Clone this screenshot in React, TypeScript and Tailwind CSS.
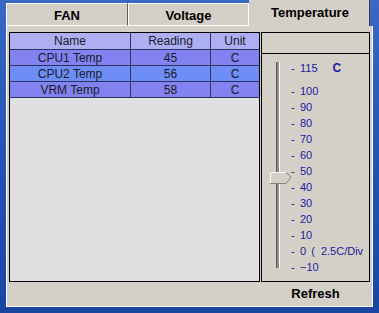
import React from "react";

const rows = [
  { name: "CPU1 Temp", reading: "45", unit: "C", bg: "bg-[#8282f0]" },
  { name: "CPU2 Temp", reading: "56", unit: "C", bg: "bg-[#6e8ef6]" },
  { name: "VRM Temp", reading: "58", unit: "C", bg: "bg-[#8282f0]" },
];

const ticks = ["100", "90", "80", "70", "60", "50", "40", "30", "20", "10", "0", "\u221210"];

export default function App() {
  return (
    <div
      className="w-[379px] h-[313px] overflow-hidden bg-gradient-to-b from-[#3a68c4] via-[#2453b0] to-[#1a46a2] pl-[6px]"
      style={{ fontFamily: '"Liberation Sans", Arial, sans-serif' }}
    >
      <div className="w-[367px] flex flex-col">
        {/* Tabs */}
        <div className="flex items-end h-[26px]">
          <div className="w-[122px] h-[23px] bg-[#d4d0c8] border-l border-t border-white border-r border-r-[#606060] border-b border-b-white flex items-center justify-center text-[13px] font-bold text-black pt-[3px]">
            FAN
          </div>
          <div className="w-[121px] h-[23px] bg-[#d4d0c8] border border-white flex items-center justify-center text-[13px] font-bold text-black pt-[3px]">
            Voltage
          </div>
          <div className="w-[121px] h-[26px] bg-[#d4d0c8] border-r border-r-[#404040] flex items-center justify-center text-[13px] font-bold text-black pl-[2px]">
            Temperature
          </div>
        </div>
        {/* Body */}
        <div className="h-[281px] bg-[#d4d0c8] border-l border-r border-b border-white flex flex-col">
          <div className="flex pt-[6px] pl-[2px]">
            {/* Left table box */}
            <div className="w-[251px] h-[250px] border border-black bg-[#e0dfe1] flex flex-col text-[12px] text-[#1a1a2a]">
              <div className="flex h-[17px] bg-[#aeaef2] border-b border-[#303060]">
                <div className="w-[121px] border-r border-[#303060] flex items-center justify-center">Name</div>
                <div className="w-[80px] border-r border-[#303060] flex items-center justify-center">Reading</div>
                <div className="w-[48px] flex items-center justify-center">Unit</div>
              </div>
              {rows.map((r) => (
                <div key={r.name} className={`flex h-[16px] ${r.bg} border-b border-[#303060]`}>
                  <div className="w-[121px] border-r border-[#303060] flex items-center justify-center">{r.name}</div>
                  <div className="w-[80px] border-r border-[#303060] flex items-center justify-center">{r.reading}</div>
                  <div className="w-[48px] flex items-center justify-center">{r.unit}</div>
                </div>
              ))}
            </div>
            {/* Right slider box */}
            <div className="ml-[1px] w-[109px] h-[250px] border border-black flex flex-col overflow-hidden">
              <div className="h-[21px] border-b border-black" />
              <div className="relative flex-1 flex">
                {/* track */}
                <div className="ml-[14px] mt-[8px] w-[4px] h-[206px] bg-[#8c8c8c] border-l border-[#5a5a5a] border-r border-r-white" />
                {/* thumb */}
                <svg className="absolute left-[8px] top-[118px]" width="22" height="12" viewBox="0 0 22 12">
                  <polygon points="0.5,0.5 16,0.5 21,5 16,11.5 0.5,11.5" fill="#d4d0c8" stroke="#808080" />
                  <polyline points="0.5,11 0.5,0.5 16,0.5" fill="none" stroke="#ffffff" />
                </svg>
                {/* labels */}
                <div className="ml-[11px] flex flex-col text-[11px] text-[#2020a0] leading-[16px] whitespace-nowrap">
                  <div className="h-[16px] mt-[6px] flex items-center">
                    <span className="w-[9px]">-</span>
                    <span>115</span>
                    <span className="ml-[15px] text-[12px] font-bold">C</span>
                  </div>
                  <div className="mt-[7px] flex flex-col">
                    {ticks.map((t) => (
                      <div key={t} className="h-[16px] flex items-center">
                        <span className="w-[9px]">-</span>
                        <span>{t}</span>
                        {t === "0" && <span className="ml-[5px] whitespace-pre">(  2.5C/Div</span>}
                      </div>
                    ))}
                  </div>
                </div>
              </div>
            </div>
          </div>
          {/* Refresh */}
          <div className="flex h-[24px] pl-[254px]">
            <div className="w-[109px] flex items-center justify-center text-[13px] font-bold text-black">Refresh</div>
          </div>
        </div>
      </div>
    </div>
  );
}
